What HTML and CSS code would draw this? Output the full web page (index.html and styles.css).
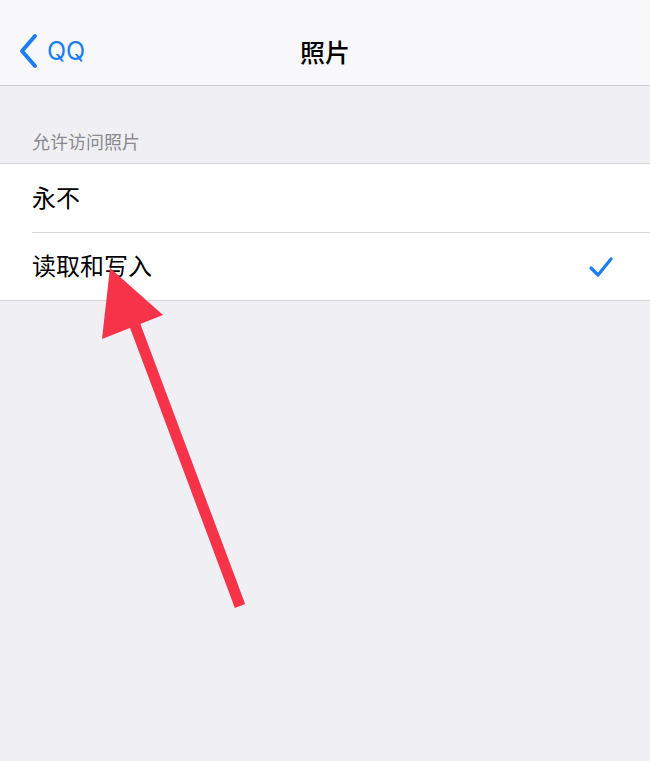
FILE: index.html
```html
<!DOCTYPE html>
<html lang="zh-CN">
<head>
    <meta charset="UTF-8">
    <meta name="viewport" content="width=device-width, initial-scale=1.0">
    <title>照片</title>
    <link rel="stylesheet" href="styles.css">
</head>
<body>
    <div class="screen">
        <header class="nav-bar">
            <a class="back-btn" href="#">
                <svg class="chevron" width="20" height="36" viewBox="0 0 20 36">
                    <path d="M17 3 L4 18 L17 33" fill="none" stroke="#1a7ef2" stroke-width="4" stroke-linecap="round" stroke-linejoin="round"/>
                </svg>
                <span>QQ</span>
            </a>
            <h1 class="nav-title">照片</h1>
            <div></div>
        </header>

        <div class="section-header">允许访问照片</div>
        <ul class="option-list">
            <li class="option-row">
                <span>永不</span>
            </li>
            <li class="option-row selected">
                <span>读取和写入</span>
                <svg class="check" width="26" height="24" viewBox="0 0 26 24">
                    <path d="M3 13 L10 20 L23 4" fill="none" stroke="#1a7ef2" stroke-width="3.2" stroke-linecap="round" stroke-linejoin="round"/>
                </svg>
            </li>
        </ul>

        <!-- annotation arrow drawn over the screenshot -->
        <svg class="annotation" width="650" height="761" viewBox="0 0 650 761">
            <line x1="133" y1="320" x2="240" y2="606" stroke="#f7334a" stroke-width="11"/>
            <polygon points="110,268 163,315 102,339" fill="#f7334a"/>
        </svg>
    </div>
</body>
</html>
```

FILE: styles.css
```css
html, body {
    margin: 0;
    padding: 0;
}

body {
    font-family: "Noto Sans CJK SC", "Noto Sans", sans-serif;
    background-color: #efeff4;
}

.screen {
    position: relative;
    width: 650px;
    height: 761px;
    overflow: hidden;
}

.nav-bar {
    display: grid;
    grid-template-columns: 1fr auto 1fr;
    align-items: center;
    height: 86px;
    background-color: #f8f8fa;
    border-bottom: 1px solid #cfcfd3;
    box-sizing: border-box;
    padding-top: 16px;
}

.back-btn {
    display: flex;
    align-items: center;
    gap: 9px;
    padding-left: 18px;
    color: #1a7ef2;
    text-decoration: none;
    font-family: "Inter", "Liberation Sans", sans-serif;
    font-size: 25px;
}

.nav-title {
    margin: 0;
    font-size: 25px;
    font-weight: 500;
    color: #000;
}

.section-header {
    padding: 42px 32px 9px;
    font-size: 18px;
    line-height: 26px;
    color: #8a8a8f;
}

.option-list {
    list-style: none;
    margin: 0;
    padding: 0 0 0 32px;
    background-color: #fff;
    border-top: 1px solid #d6d6da;
    border-bottom: 1px solid #d6d6da;
}

.option-row {
    display: flex;
    align-items: center;
    justify-content: space-between;
    height: 68px;
    box-sizing: border-box;
    padding: 0 36px 4px 0;
    font-size: 24px;
    color: #000;
}

.option-row + .option-row {
    border-top: 1px solid #d6d6da;
}

.option-row .check {
    margin-top: 4px;
}

.annotation {
    position: absolute;
    left: 0;
    top: 0;
    pointer-events: none;
}
```
